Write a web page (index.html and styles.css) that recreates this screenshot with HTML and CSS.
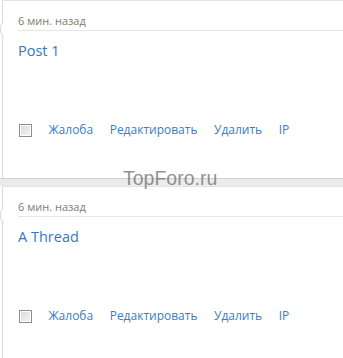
FILE: index.html
```html
<!DOCTYPE html>
<html lang="ru">
<head>
<meta charset="utf-8">
<title>Posts</title>
<link rel="stylesheet" href="styles.css">
</head>
<body>
<div class="feed">
  <div class="post">
    <svg class="notch" width="4" height="16" viewBox="0 0 4 16"><polygon points="3.5,0 0.5,5 0.5,11 3.5,16" fill="#fff"/><polyline points="3.5,0 0.5,5 0.5,11 3.5,16" fill="none" stroke="#dcdcdc" stroke-width="1"/></svg>
    <div class="meta">6 мин. назад</div>
    <div class="title"><a href="#">Post 1</a></div>
    <div class="actions">
      <span class="check"></span>
      <a href="#">Жалоба</a>
      <a href="#">Редактировать</a>
      <a href="#">Удалить</a>
      <a href="#">IP</a>
    </div>
  </div>
  <div class="sep"></div>
  <div class="post">
    <svg class="notch" width="4" height="16" viewBox="0 0 4 16"><polygon points="3.5,0 0.5,5 0.5,11 3.5,16" fill="#fff"/><polyline points="3.5,0 0.5,5 0.5,11 3.5,16" fill="none" stroke="#dcdcdc" stroke-width="1"/></svg>
    <div class="meta">6 мин. назад</div>
    <div class="title"><a href="#">A Thread</a></div>
    <div class="actions">
      <span class="check"></span>
      <a href="#">Жалоба</a>
      <a href="#">Редактировать</a>
      <a href="#">Удалить</a>
      <a href="#">IP</a>
    </div>
  </div>
  <div class="watermark">TopForo.ru</div>
</div>
</body>
</html>
```

FILE: styles.css
```css
html, body {
  margin: 0;
  padding: 0;
  background: #fff;
}
body {
  font-family: "Open Sans", "Noto Sans", sans-serif;
  overflow: hidden;
}
.feed {
  position: relative;
}
.post {
  position: relative;
  margin-left: 2px;
  border-left: 1px solid #dcdcdc;
  border-top: 1px solid #e3e3e3;
}
.notch {
  position: absolute;
  left: -3px;
  top: 20px;
  display: block;
}
.meta {
  margin-left: 15px;
  height: 19px;
  padding-top: 10px;
  line-height: 19px;
  font-size: 11px;
  color: #85796f;
  border-bottom: 1px solid #e6e6e6;
}
.title {
  margin-left: 15px;
  padding-top: 10px;
  line-height: 20px;
  font-size: 14.5px;
}
.title a {
  color: #3478be;
  text-decoration: none;
}
.actions {
  margin-left: 16px;
  margin-top: 59px;
  padding-bottom: 38px;
  height: 20px;
  display: flex;
  align-items: center;
  gap: 16.5px;
  font-size: 12px;
}
.actions a {
  color: #3b7cc3;
  text-decoration: none;
  line-height: 20px;
}
.check {
  width: 11px;
  height: 11px;
  border: 1px solid #8e8e8e;
  box-shadow: inset 0 0 0 1px #fff;
  background: linear-gradient(135deg, #d8d8d8, #f6f6f6);
}
.sep {
  height: 7px;
  background: #ebebeb;
  border-top: 1px solid #d2d2d2;
}
.watermark {
  position: absolute;
  left: 123px;
  top: 166px;
  font-family: "Liberation Sans", Arial, sans-serif;
  font-size: 19.5px;
  line-height: 24px;
  color: rgba(110, 110, 110, 0.75);
  pointer-events: none;
}
```
